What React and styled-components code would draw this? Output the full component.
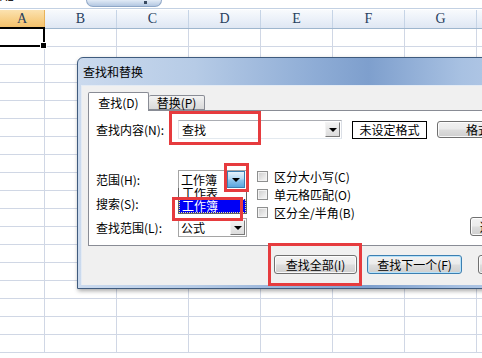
import React from 'react'
import styled, { createGlobalStyle } from 'styled-components'

const GlobalStyle = createGlobalStyle`
  html, body {
    margin: 0;
    padding: 0;
    background: #fff;
    overflow: hidden;
  }
  body {
    font-family: "Noto Sans CJK SC", "DejaVu Sans", sans-serif;
    font-size: 12px;
    color: #000;
  }
  #root {
    position: relative;
    width: 482px;
    height: 358px;
    overflow: hidden;
  }
`

const columns = [
  { name: 'A', width: 45 },
  { name: 'B', width: 72 },
  { name: 'C', width: 72 },
  { name: 'D', width: 72 },
  { name: 'E', width: 72 },
  { name: 'F', width: 72 },
  { name: 'G', width: 72 },
  { name: 'H', width: 72 },
]

const ROWS = 18

// ---- spreadsheet ----

const Sheet = styled.div`
  display: flex;
  flex-direction: column;
  width: 560px;
`

const TopStrip = styled.div`
  display: flex;
  height: 8px;
  border-bottom: 1px solid #c3d1e3;
  overflow: hidden;
`

const NameBox = styled.div`
  width: 86px;
  flex: none;
  font-size: 12px;
  line-height: 12px;
  margin-top: -10px;
  color: #222;
`

const Expander = styled.div`
  width: 76px;
  height: 7px;
  box-sizing: border-box;
  border: 1px solid #8fa7c7;
  border-top: none;
  border-radius: 0 0 8px 8px;
  background: linear-gradient(#e2ebf6, #b3c7e1);
  display: flex;
  justify-content: flex-end;
  padding-right: 14px;
`

const ExpanderMark = styled.span`
  width: 3px;
  height: 3px;
  margin-top: 1px;
  background: #3a4a60;
`

const HeaderRow = styled.div`
  display: flex;
  height: 19px;
  margin-top: 1px;
  box-sizing: border-box;
  border-bottom: 1px solid #9eb6ce;
`

const ColHead = styled.div`
  flex: none;
  width: ${p => p.$w}px;
  box-sizing: border-box;
  border-right: 1px solid ${p => (p.$active ? '#e8b25a' : '#c6d4e6')};
  background: ${p =>
    p.$active
      ? 'linear-gradient(#fbe2b0, #f7cd82 60%, #f3bf69)'
      : 'linear-gradient(#f8fafd, #e9eff8 60%, #dfe7f3)'};
  display: flex;
  align-items: center;
  justify-content: center;
  font-family: "Liberation Serif", "DejaVu Serif", serif;
  font-size: 14px;
  color: #27405e;
`

const Row = styled.div`
  display: flex;
  height: 18px;
  box-sizing: border-box;
  border-bottom: 1px solid #d0d7e5;
`

const Cell = styled.div`
  flex: none;
  position: relative;
  width: ${p => p.$w}px;
  box-sizing: border-box;
  border-right: 1px solid #d0d7e5;

  ${p =>
    p.$selected &&
    `
    &::after {
      content: '';
      position: absolute;
      left: -2px;
      top: -2px;
      right: -1px;
      bottom: -1px;
      border: 2px solid #000;
    }
    &::before {
      content: '';
      position: absolute;
      right: -3px;
      bottom: -3px;
      width: 5px;
      height: 5px;
      background: #000;
      border: 1px solid #fff;
      z-index: 1;
    }
  `}
`

// ---- dialog ----

const Dialog = styled.div`
  position: absolute;
  left: 77px;
  top: 57px;
  width: 470px;
  height: 232px;
  box-sizing: border-box;
  border: 1px solid #3f5b7e;
  border-radius: 6px 6px 0 0;
  background: linear-gradient(90deg, #cbdaee, #b6cbe6 25%, #8fadd6 50%, #7e9fcd 62%, #a8c1e2 82%, #bccfe9);
  padding: 0 3px 3px 3px;
  display: flex;
  flex-direction: column;
  box-shadow: 1px 2px 4px rgba(0, 0, 0, 0.35);
`

const TitleBar = styled.div`
  height: 27px;
  flex: none;
  display: flex;
  align-items: center;
  padding-left: 2px;
  font-size: 12px;
  color: #000;
`

const Client = styled.div`
  flex: 1;
  background: #f0f0f0;
  border-top: 1px solid #e4ebf4;
  border-left: 1px solid #e4ebf4;
  padding: 6px 0 0 6px;
  display: flex;
  flex-direction: column;
`

const TabStrip = styled.div`
  display: flex;
  align-items: flex-end;
  height: 19px;
  margin-bottom: -1px;
  position: relative;
  z-index: 1;
`

const Tab = styled.div`
  box-sizing: border-box;
  width: ${p => p.$w}px;
  height: ${p => (p.$active ? 19 : 15)}px;
  margin-bottom: ${p => (p.$active ? 0 : 1)}px;
  border: 1px solid #898c95;
  border-bottom: ${p => (p.$active ? 'none' : '1px solid #898c95')};
  border-left: ${p => (p.$active ? '1px solid #898c95' : 'none')};
  border-radius: 2px 2px 0 0;
  background: ${p => (p.$active ? '#fff' : 'linear-gradient(#f3f3f3, #e5e5e5 50%, #d9d9d9)')};
  display: flex;
  align-items: center;
  justify-content: center;
  font-size: 12px;
`

const Panel = styled.div`
  box-sizing: border-box;
  width: 460px;
  height: 136px;
  border: 1px solid #898c95;
  background: #fff;
  padding: 8px 0 0 7px;
  display: flex;
  flex-direction: column;
`

const FindRow = styled.div`
  display: flex;
  align-items: center;
  height: 21px;
`

const Label = styled.div`
  width: 82px;
  flex: none;
  white-space: nowrap;
`

const TextCombo = styled.div`
  box-sizing: border-box;
  width: 164px;
  height: 19px;
  flex: none;
  border: 1px solid #abadb3;
  border-left-color: #e2e3ea;
  border-right-color: #dbdfe6;
  border-bottom-color: #e3e9ef;
  display: flex;
  align-items: center;
  padding-left: 3px;
  background: #fff;
`

const ComboText = styled.span`
  flex: 1;
  font-size: 12px;
`

const ArrowButton = styled.div`
  width: ${p => (p.$hot ? 18 : 15)}px;
  height: ${p => (p.$hot ? 17 : 15)}px;
  flex: none;
  box-sizing: border-box;
  margin-right: 1px;
  display: flex;
  align-items: center;
  justify-content: center;
  border: 1px solid;
  border-color: ${p => (p.$hot ? '#3c7fb1' : '#f4f4f4 #7a7a7a #7a7a7a #f4f4f4')};
  background: ${p =>
    p.$hot
      ? 'linear-gradient(#e6f3fc, #b4daf4 45%, #8cc4ec 55%, #5aa5de)'
      : 'linear-gradient(#f2f2f2, #dcdcdc)'};

  &::after {
    content: '';
    border-left: 4px solid transparent;
    border-right: 4px solid transparent;
    border-top: 4px solid #000;
    margin-top: 1px;
  }
`

const FormatBox = styled.div`
  box-sizing: border-box;
  width: 75px;
  height: 18px;
  margin-left: 10px;
  flex: none;
  border: 1px solid #000;
  background: #fff;
  display: flex;
  align-items: center;
  justify-content: center;
`

const Button = styled.div`
  box-sizing: border-box;
  width: ${p => p.$w}px;
  height: ${p => p.$h || 19}px;
  margin-left: ${p => p.$ml || 0}px;
  flex: none;
  border: 1px solid ${p => (p.$default ? '#3c7fb1' : '#707070')};
  border-radius: 3px;
  background: linear-gradient(#f2f2f2, #ebebeb 48%, #dddddd 52%, #cfcfcf);
  box-shadow: inset 0 0 0 1px ${p => (p.$default ? '#b6e2fa' : 'rgba(255,255,255,0.85)')};
  display: flex;
  align-items: center;
  justify-content: center;
  white-space: nowrap;
  font-size: 12px;
  overflow: hidden;
`

const Middle = styled.div`
  display: flex;
  align-items: flex-start;
  margin-top: 27px;
`

const OptionGrid = styled.div`
  flex: none;
  display: grid;
  grid-template-columns: 82px 69px;
  grid-auto-rows: 19px;
  row-gap: 5px;
  align-items: center;
  margin-top: 3px;
`

const SelectWrap = styled.div`
  position: relative;
  height: 19px;
`

const Select = styled.div`
  box-sizing: border-box;
  width: 69px;
  height: 19px;
  border: 1px solid #a5a5a5;
  background: #fff;
  display: flex;
  align-items: center;
  padding-left: 2px;
`

const DropList = styled.div`
  position: absolute;
  left: 0;
  top: 18px;
  width: 69px;
  box-sizing: border-box;
  border: 1px solid #646464;
  border-top: none;
  background: #fff;
  z-index: 2;
`

const DropItem = styled.div`
  height: ${p => (p.$selected ? 14 : 11)}px;
  line-height: ${p => (p.$selected ? 12 : 10)}px;
  overflow: hidden;
  box-sizing: border-box;
  padding-left: 2px;
  background: ${p => (p.$selected ? '#0000f6' : '#fff')};
  color: ${p => (p.$selected ? '#fff' : '#000')};
  border: 1px dotted ${p => (p.$selected ? '#f0e890' : 'transparent')};
  border-top-width: ${p => (p.$selected ? 1 : 0)}px;
`

const CheckColumn = styled.div`
  flex: none;
  width: 203px;
  margin-left: 10px;
  display: flex;
  flex-direction: column;
`

const CheckRow = styled.div`
  height: 18px;
  display: flex;
  align-items: center;
  gap: 6px;
  white-space: nowrap;
`

const CheckBox = styled.span`
  width: 11px;
  height: 11px;
  flex: none;
  box-sizing: border-box;
  border: 1px solid #8e8f8f;
  background: linear-gradient(135deg, #cbcbcb, #ececec 70%, #f7f7f7);
  box-shadow: inset 0 0 0 1px #f3f3f3;
`

const OptionsButton = styled(Button)`
  align-self: flex-end;
  margin-bottom: 1px;
`

const ButtonRow = styled.div`
  display: flex;
  margin-top: 9px;
  padding-left: 186px;
`

// ---- red annotation boxes ----

const Mark = styled.div`
  position: absolute;
  left: ${p => p.$x}px;
  top: ${p => p.$y}px;
  width: ${p => p.$w}px;
  height: ${p => p.$h}px;
  box-sizing: border-box;
  border: 3px solid #e63b3e;
  z-index: 10;
`

const marks = [
  { x: 169, y: 111, w: 92, h: 34 },
  { x: 224, y: 163, w: 25, h: 29 },
  { x: 172, y: 197, w: 71, h: 24 },
  { x: 268, y: 243, w: 94, h: 43 },
]

export default function App() {
  return (
    <>
      <GlobalStyle />
      <Sheet>
        <TopStrip>
          <NameBox>A1</NameBox>
          <Expander>
            <ExpanderMark />
          </Expander>
        </TopStrip>
        <HeaderRow>
          {columns.map((c, i) => (
            <ColHead key={c.name} $w={c.width} $active={i === 0}>
              {c.name}
            </ColHead>
          ))}
        </HeaderRow>
        {Array.from({ length: ROWS }).map((_, r) => (
          <Row key={r}>
            {columns.map((c, i) => (
              <Cell key={c.name} $w={c.width} $selected={r === 0 && i === 0} />
            ))}
          </Row>
        ))}
      </Sheet>

      <Dialog>
        <TitleBar>查找和替换</TitleBar>
        <Client>
          <TabStrip>
            <Tab $active $w={61}>查找(D)</Tab>
            <Tab $w={56}>替换(P)</Tab>
          </TabStrip>
          <Panel>
            <FindRow>
              <Label>查找内容(N):</Label>
              <TextCombo>
                <ComboText>查找</ComboText>
                <ArrowButton />
              </TextCombo>
              <FormatBox>未设定格式</FormatBox>
              <Button $w={110} $h={17} $ml={10}>格式(M)...</Button>
            </FindRow>

            <Middle>
              <OptionGrid>
                <Label>范围(H):</Label>
                <SelectWrap>
                  <Select>
                    <ComboText>工作簿</ComboText>
                    <ArrowButton $hot />
                  </Select>
                  <DropList>
                    <DropItem>工作表</DropItem>
                    <DropItem $selected>工作簿</DropItem>
                  </DropList>
                </SelectWrap>
                <Label>搜索(S):</Label>
                <SelectWrap>
                  <Select>
                    <ComboText>按行</ComboText>
                    <ArrowButton />
                  </Select>
                </SelectWrap>
                <Label>查找范围(L):</Label>
                <SelectWrap>
                  <Select>
                    <ComboText>公式</ComboText>
                    <ArrowButton />
                  </Select>
                </SelectWrap>
              </OptionGrid>

              <CheckColumn>
                <CheckRow>
                  <CheckBox />
                  区分大小写(C)
                </CheckRow>
                <CheckRow>
                  <CheckBox />
                  单元格匹配(O)
                </CheckRow>
                <CheckRow>
                  <CheckBox />
                  区分全/半角(B)
                </CheckRow>
              </CheckColumn>

              <OptionsButton $w={75} $ml={10}>选项(T) &lt;&lt;</OptionsButton>
            </Middle>
          </Panel>

          <ButtonRow>
            <Button $w={83}>查找全部(I)</Button>
            <Button $w={95} $ml={10} $default>查找下一个(F)</Button>
            <Button $w={75} $ml={16}>关闭</Button>
          </ButtonRow>
        </Client>
      </Dialog>

      {marks.map((m, i) => (
        <Mark key={i} $x={m.x} $y={m.y} $w={m.w} $h={m.h} />
      ))}
    </>
  )
}
